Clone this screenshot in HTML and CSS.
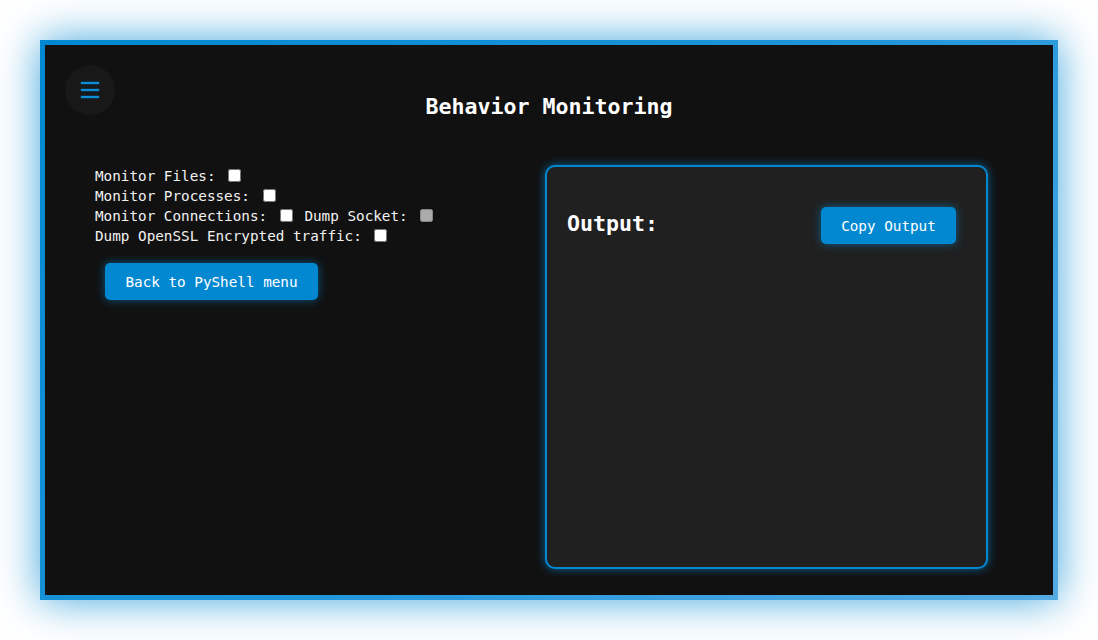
FILE: index.html
```html
<!DOCTYPE html>
<html lang="en">
<head>
<meta charset="utf-8">
<title>Behavior Monitoring</title>
<link rel="stylesheet" href="styles.css">
</head>
<body>
<div class="frame">
  <button class="menu-btn" aria-label="Menu">
    <span class="bar"></span><span class="bar"></span><span class="bar"></span>
  </button>
  <h1 class="title">Behavior Monitoring</h1>
  <div class="content">
    <div class="controls">
      <div class="row"><label>Monitor Files: <input type="checkbox"></label></div>
      <div class="row"><label>Monitor Processes: <input type="checkbox"></label></div>
      <div class="row"><label>Monitor Connections: <input type="checkbox"></label> <label>Dump Socket: <input type="checkbox" disabled></label></div>
      <div class="row"><label>Dump OpenSSL Encrypted traffic: <input type="checkbox"></label></div>
      <button class="btn back-btn">Back to PyShell menu</button>
    </div>
    <div class="output-panel">
      <div class="output-head">
        <h2 class="output-title">Output:</h2>
        <button class="btn">Copy Output</button>
      </div>
    </div>
  </div>
</div>
</body>
</html>
```

FILE: styles.css
```css
html, body {
  margin: 0;
  padding: 0;
  background: #ffffff;
}
body {
  padding: 40px;
  font-family: "DejaVu Sans Mono", "Liberation Mono", monospace;
  color: #f2f2f2;
}
.frame {
  position: relative;
  height: 550px;
  background: #111111;
  border: 5px solid #0288d1;
  border-image: linear-gradient(135deg, #0288d1 0%, #1e95da 50%, #55aae2 100%) 1;
  box-shadow: 0 0 40px rgba(2, 136, 209, 0.75);
}
.menu-btn {
  position: absolute;
  left: 20px;
  top: 20px;
  width: 50px;
  height: 50px;
  border-radius: 50%;
  border: none;
  background: #181818;
  padding: 0;
  display: flex;
  flex-direction: column;
  align-items: center;
  justify-content: center;
  gap: 4.5px;
}
.bar {
  display: block;
  width: 18px;
  height: 2.5px;
  background: #0a8fd8;
  box-shadow: 0 0 2px rgba(2, 136, 209, 0.8);
}
.title {
  margin: 47px 0 0;
  text-align: center;
  font-size: 21.6px;
  line-height: 30px;
  font-weight: bold;
  color: #ffffff;
}
.content {
  display: flex;
  margin-top: 43px;
  padding-left: 50px;
}
.controls {
  width: 450px;
  font-size: 14.3px;
  line-height: 20px;
}
.row {
  height: 20px;
  white-space: pre;
}
.row label {
  position: relative;
  top: 1px;
}
.row input {
  margin: 0 3px 0 4px;
  width: 13px;
  height: 13px;
  vertical-align: -1px;
}
.btn {
  font-family: inherit;
  font-size: 14.3px;
  color: #ffffff;
  background: #0288d1;
  border: none;
  border-radius: 5px;
  height: 37px;
  padding: 0 20px;
  box-shadow: 0 0 10px rgba(2, 136, 209, 0.6);
}
.back-btn {
  margin: 18px 0 0 10px;
  width: 213px;
}
.output-panel {
  width: 439px;
  height: 400px;
  background: #202020;
  border: 2px solid #0288d1;
  border-radius: 10px;
  box-shadow: 0 0 10px rgba(2, 136, 209, 0.7);
}
.output-head {
  display: flex;
  justify-content: space-between;
  align-items: center;
  padding: 40px 30px 0 20px;
}
.output-title {
  margin: 0 0 4px;
  font-size: 21.6px;
  line-height: 30px;
  font-weight: bold;
  color: #ffffff;
}
.output-head .btn {
  width: 135px;
}
```
